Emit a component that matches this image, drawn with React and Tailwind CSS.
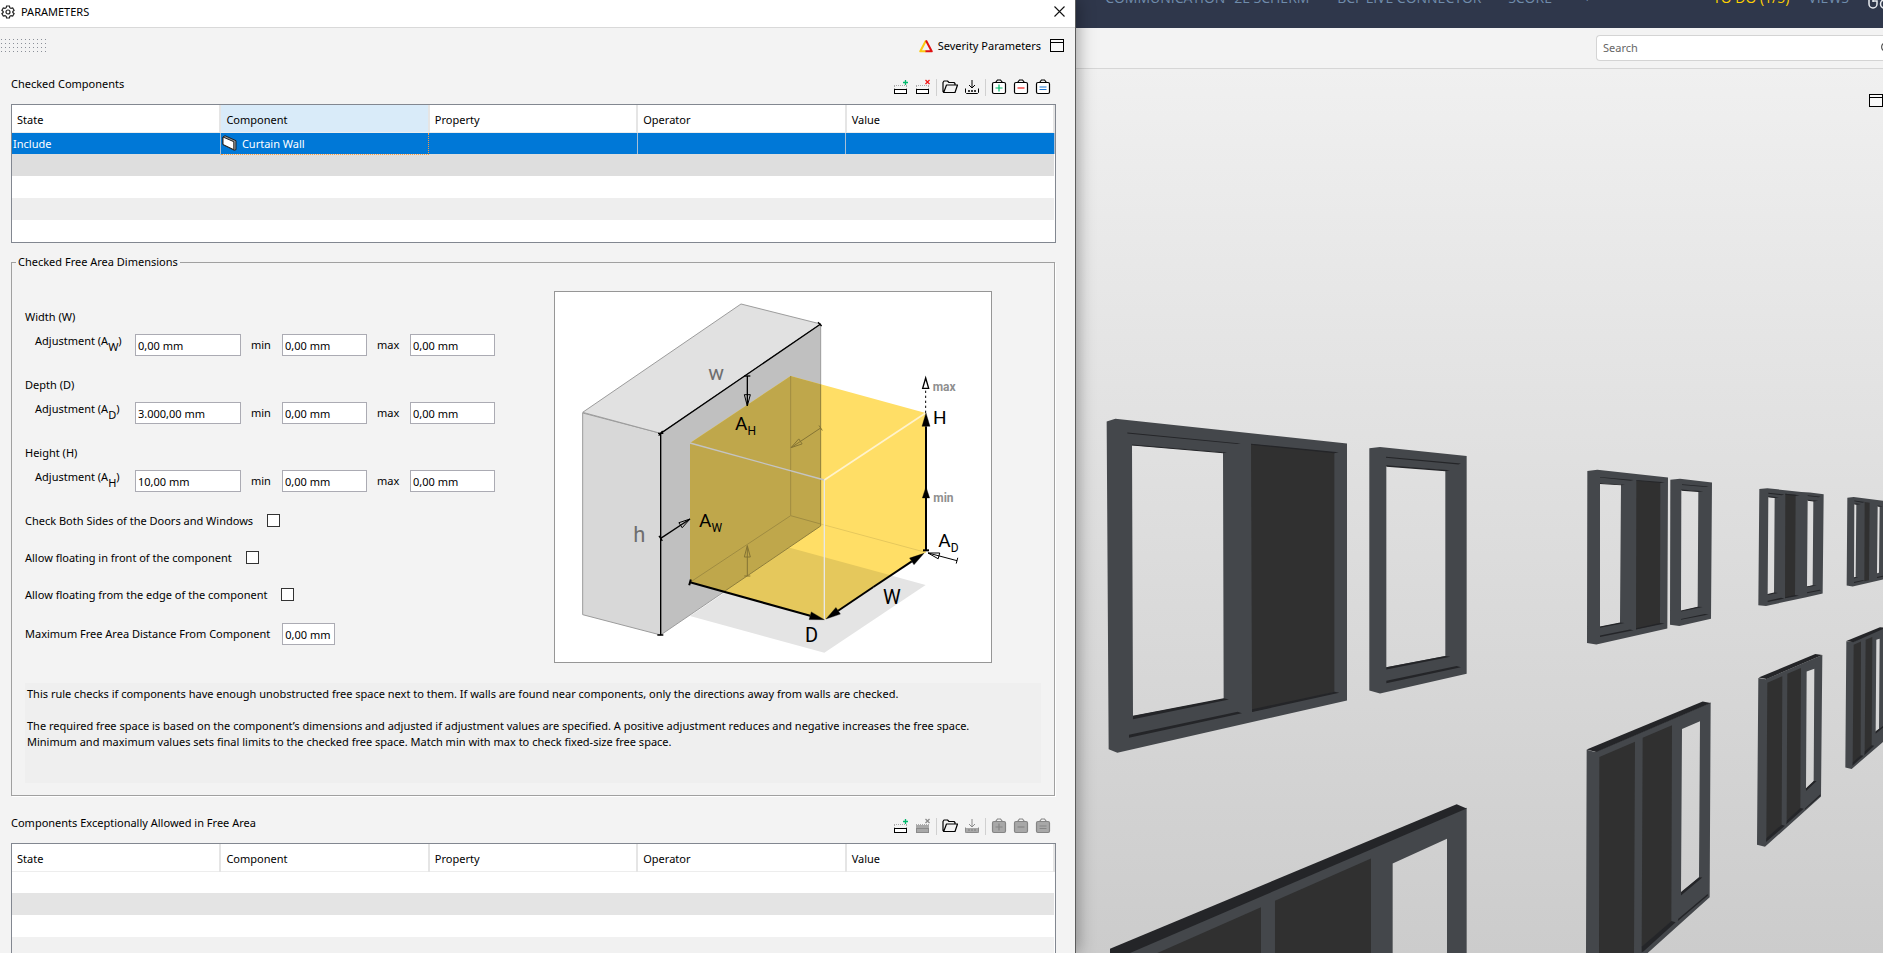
import React from 'react';

const COLUMNS = ['State', 'Component', 'Property', 'Operator', 'Value'];

function GearIcon() {
  return (
    <svg width="14" height="14" viewBox="0 0 14 14" fill="none" stroke="#222" strokeWidth="1.2">
      <path d="M5.600 1h2.800l.4 1.700 1.200.7 1.700-.5 1.400 2.400-1.300 1.200v1l1.300 1.200-1.400 2.400-1.700-.5-1.200.7-.4 1.700H5.600l-.4-1.700-1.200-.7-1.700.5L.9 8.700l1.300-1.200v-1L.9 5.300l1.400-2.400 1.700.5 1.200-.7z" />
      <circle cx="7" cy="7" r="2" />
    </svg>
  );
}

function CloseIcon() {
  return (
    <svg width="11" height="11" viewBox="0 0 11 11" stroke="#111" strokeWidth="1.1">
      <path d="M.5.5l10 10M10.500.5l-10 10" />
    </svg>
  );
}

function WindowIcon() {
  return (
    <svg width="14" height="14" viewBox="0 0 14 14" fill="#fafafa" stroke="#000" shapeRendering="crispEdges">
      <rect x=".5" y=".5" width="13" height="12" />
      <path d="M0 3.500h14" />
    </svg>
  );
}

function SeverityIcon() {
  return (
    <svg width="14" height="14" viewBox="0 0 14 14" fill="none" strokeWidth="2" strokeLinejoin="round">
      <path d="M7 1.500L1.300 12.300H7" stroke="#fbc912" />
      <path d="M7 1.500l5.700 10.800H6.500" stroke="#e01010" />
    </svg>
  );
}

function WallIcon() {
  return (
    <svg width="15" height="16" viewBox="0 0 15 16" strokeLinejoin="round" stroke="#222">
      <path d="M1 2l2-1.300 11 5v9l-1.800.5L1 9.500z" fill="#9a9a9a" />
      <path d="M1 2l10.800 4.700v8L1 9.500z" fill="#fff" />
    </svg>
  );
}

function RowIcon({ remove, disabled }) {
  const ink = disabled ? '#8a8a8a' : '#000';
  const mark = disabled ? '#8a8a8a' : remove ? '#f01818' : '#00b86b';
  return (
    <svg width="16" height="16" viewBox="0 0 16 16" fill="none">
      {disabled && <rect x="1" y="7" width="13" height="8" fill="#a8a8a8" />}
      <path d="M1 6.500h13M1.500 7v3M13.500 7v3" stroke="#aaa" strokeDasharray="1 1" />
      <rect x="1.500" y="10.500" width="12" height="4" stroke={ink} fill={disabled ? 'none' : '#fff'} />
      {remove ? (
        <path d="M10.500 1l4 4M14.500 1l-4 4" stroke={mark} strokeWidth="1.300" />
      ) : (
        <path d="M12.500 1v5M10 3.500h5" stroke={mark} strokeWidth="1.300" />
      )}
    </svg>
  );
}

function FolderIcon() {
  return (
    <svg width="16" height="16" viewBox="0 0 16 16" fill="none" stroke="#000" strokeWidth="1.200" strokeLinejoin="round">
      <path d="M1.700 13.500L1 12.500v-9l1-1.500h3.500l1.500 1.500h5l1 1v1.500M1.700 13.500L4.500 6h11l-2.500 7.500z" />
    </svg>
  );
}

function DownloadIcon({ disabled }) {
  const ink = disabled ? '#8a8a8a' : '#000';
  return (
    <svg width="16" height="16" viewBox="0 0 16 16" fill="none" stroke={ink}>
      {disabled && <rect x="1" y="10" width="14" height="5" fill="#a8a8a8" stroke="none" />}
      <path d="M8 1v8M5 6l3 3 3-3" />
      <path d="M1.500 9.500v4l1 1h11l1-1v-4" />
      <path d="M4 12h8" strokeWidth="1.500" strokeDasharray="2 1" />
    </svg>
  );
}

function BagIcon({ sign, disabled }) {
  const paths = { plus: 'M8 5.500v7M4.500 9h7', minus: 'M4.500 9h7', equal: 'M4.500 8h7M4.500 10.500h7' };
  const colors = { plus: '#00b86b', minus: '#f01818', equal: '#1a74d0' };
  return (
    <svg width="16" height="16" viewBox="0 0 16 16" stroke={disabled ? '#858585' : '#000'} strokeWidth="1.200" fill="none">
      <path d="M4.500 3.500L6.500 1h3l2 2.500" />
      <rect x="1.500" y="3.500" width="13" height="11" rx="1.500" fill={disabled ? '#a8a8a8' : '#fff'} />
      <path d={paths[sign]} stroke={disabled ? '#858585' : colors[sign]} />
    </svg>
  );
}

function SearchIcon() {
  return (
    <svg width="14" height="14" viewBox="0 0 14 14" fill="none" stroke="#555" strokeWidth="1.200">
      <circle cx="5" cy="6" r="4.400" />
      <path d="M8 9l4 4" />
    </svg>
  );
}

function ToolButton({ label, disabled, children }) {
  return (
    <button type="button" aria-label={label} disabled={disabled} className="block size-4">
      {children}
    </button>
  );
}

function Separator() {
  return <span className="-mx-px h-[17px] w-px bg-[#d0d0d0]" />;
}

function Toolbar({ empty }) {
  return (
    <div className="flex items-center gap-[6px] pr-[5px]">
      <ToolButton label="Add row"><RowIcon /></ToolButton>
      <ToolButton label="Remove row" disabled={empty}><RowIcon remove disabled={empty} /></ToolButton>
      <Separator />
      <ToolButton label="Open"><FolderIcon /></ToolButton>
      <ToolButton label="Save" disabled={empty}><DownloadIcon disabled={empty} /></ToolButton>
      <Separator />
      <ToolButton label="Add selection" disabled={empty}><BagIcon sign="plus" disabled={empty} /></ToolButton>
      <ToolButton label="Remove selection" disabled={empty}><BagIcon sign="minus" disabled={empty} /></ToolButton>
      <ToolButton label="Set selection" disabled={empty}><BagIcon sign="equal" disabled={empty} /></ToolButton>
    </div>
  );
}

function FilterTable({ label, activeColumn, selected, stripes }) {
  return (
    <div className="border border-[#828790] bg-white">
      <table aria-label={label} className="w-full table-fixed border-collapse text-left">
        <thead>
          <tr className="h-[27px]">
            {COLUMNS.map((name) => (
              <th
                key={name}
                className={`border-r-2 border-b border-r-[#e5e5e5] border-b-[#ededed] pt-[3px] pl-[5px] font-normal ${name === activeColumn ? 'bg-[#d9ebf9]' : ''}`}
              >
                {name}
              </th>
            ))}
          </tr>
        </thead>
        <tbody>
          {selected && (
            <tr className="h-[22px] bg-[#0078d7] text-white">
              <td className="border-r border-[#a7bfd6] pt-[2px] pl-px">{selected.state}</td>
              <td className="border border-dotted border-[#ff9b3d] p-0">
                <span className="flex items-center gap-[5px] pl-px">
                  <WallIcon />
                  <span className="pt-[2px]">{selected.component}</span>
                </span>
              </td>
              <td className="border-r border-[#a7bfd6]" />
              <td className="border-r border-[#a7bfd6]" />
              <td className="border-r border-[#a7bfd6]" />
            </tr>
          )}
          {stripes.map((stripe, i) => (
            <tr key={i} className={`h-[22px] ${stripe}`}>
              <td colSpan={5} />
            </tr>
          ))}
        </tbody>
      </table>
    </div>
  );
}

function Dimension({ title, sub, value }) {
  const id = `adjust-${sub}`;
  const field = 'h-[22px] border border-[#ababb3] bg-white pt-px pl-[2px]';
  return (
    <div className="h-[68px]">
      <h3 className="h-[26px] pt-px leading-4">{title}</h3>
      <div className="flex items-center">
        <label htmlFor={id} className="-mt-2 w-[110px] pl-[10px] whitespace-nowrap">
          Adjustment (A<sub className="bottom-0 align-[-6px] text-[11px]">{sub}</sub>)
        </label>
        <input id={id} defaultValue={value} className={`${field} w-[106px]`} />
        <label htmlFor={`${id}-min`} className="w-[41px] pl-[10px]">min</label>
        <input id={`${id}-min`} defaultValue="0,00 mm" className={`${field} w-[85px]`} />
        <label htmlFor={`${id}-max`} className="w-[43px] pl-[10px]">max</label>
        <input id={`${id}-max`} defaultValue="0,00 mm" className={`${field} w-[85px]`} />
      </div>
    </div>
  );
}

function CheckRow({ id, children }) {
  return (
    <div className="flex h-[37px] items-center gap-[14px]">
      <label htmlFor={id}>{children}</label>
      <input id={id} type="checkbox" className="size-[13px] appearance-none border border-[#333] bg-white checked:bg-[#333]" />
    </div>
  );
}

function Arrow({ x1, y1, x2, y2, len = 34, half = 9, width = 4, color = '#000', hollow, tick }) {
  const d = Math.hypot(x2 - x1, y2 - y1);
  const ux = (x2 - x1) / d;
  const uy = (y2 - y1) / d;
  const bx = x2 - ux * len;
  const by = y2 - uy * len;
  return (
    <g stroke={color} strokeWidth={width}>
      <path d={`M${x1} ${y1}L${hollow ? x2 : bx} ${hollow ? y2 : by}`} />
      {tick && <path d={`M${x1 - uy * 9} ${y1 + ux * 9}L${x1 + uy * 9} ${y1 - ux * 9}`} />}
      <polygon
        points={`${x2},${y2} ${bx - uy * half},${by + ux * half} ${bx + uy * half},${by - ux * half}`}
        fill={hollow ? 'none' : color}
        strokeWidth={hollow ? 3 : 1}
      />
    </g>
  );
}

function FreeAreaDiagram() {
  return (
    <svg viewBox="45 36 1308 1111" className="block w-full" fontFamily="Roboto, sans-serif" fill="none" role="img" aria-label="Free area dimensions">
      <polygon points="450,1008 752,804 1157,915 853,1118" fill="#e4e4e4" />
      <g stroke="#9c9c9c" strokeWidth="3" strokeLinejoin="round">
        <polygon points="128,399 362,460 362,1065 128,1004" fill="#d8d8d8" />
        <polygon points="128,397 603,72 842,132 362,460" fill="#e1e1e1" />
        <polygon points="362,460 842,132 842,738 362,1065" fill="#c0c0c0" />
      </g>

      <polygon points="450,489 752,288 1157,399 1157,817 853,1019 450,907" fill="#ffde66" />
      <polygon points="744,804 752,804 1052,886 853,1019 552,935" fill="#e5c85c" />
      <polygon points="450,489 752,288 842,313 842,738 552,935 450,907" fill="#bfa74b" />
      <path d="M752 288V707L450 907" stroke="#a08c40" strokeWidth="3" />
      <path d="M752 707l90 25" stroke="#a08c40" strokeWidth="3" />
      <path d="M842 732l315 85" stroke="#e6c85c" strokeWidth="3" />
      <path d="M842 313V738L552 935" stroke="#8f7d3b" strokeWidth="3" />
      <path d="M450 489l403 111" stroke="#c4c4c4" strokeWidth="4" />
      <path d="M1157 399L853 600" stroke="#fff3cc" strokeWidth="5" />
      <path d="M853 600v419" stroke="#e8e8e8" strokeWidth="4" />

      <path d="M842 132L362 460V1065" stroke="#000" strokeWidth="4" />
      <path d="M834 127l11 11M354 460h16M368 453l-12 14M352 1065h18" stroke="#000" strokeWidth="4" />

      <Arrow x1={622} y1={288} x2={622} y2={378} hollow tick />
      <Arrow x1={362} y1={775} x2={450} y2={717} hollow tick />
      <Arrow x1={1251} y1={842} x2={1164} y2={819} hollow tick width={3} />
      <Arrow x1={842} y1={444} x2={753} y2={503} hollow tick width={3} color="#857333" />
      <Arrow x1={622} y1={888} x2={622} y2={797} hollow tick width={3} color="#857333" />

      <Arrow x1={450} y1={907} x2={853} y2={1019} len={44} half={12} width={6} tick />
      <Arrow x1={1000} y1={921} x2={858} y2={1017} len={44} half={12} width={6} />
      <Arrow x1={1000} y1={921} x2={1152} y2={820} len={44} half={12} width={6} />
      <Arrow x1={1158} y1={811} x2={1158} y2={399} len={40} half={12} width={6} tick />
      <Arrow x1={1158} y1={811} x2={1158} y2={620} len={34} half={11} width={6} />
      <path d="M1157 399V326" stroke="#000" strokeWidth="3" strokeDasharray="7 8" />
      <polygon points="1157,294 1148,325 1166,325" stroke="#000" strokeWidth="4" />

      <g fill="#6e6e6e" fontSize="63">
        <text x="505" y="299">w</text>
        <text x="280" y="786" fontSize="66">h</text>
      </g>
      <g fill="#8f8f8f" fontSize="36" fontWeight="700">
        <text x="1178" y="333">max</text>
        <text x="1180" y="666">min</text>
      </g>
      <g fill="#000" fontSize="57">
        <text x="1179" y="432">H</text>
        <text x="585" y="450">A<tspan fontSize="36" dy="15">H</tspan></text>
        <text x="477" y="741">A<tspan fontSize="36" dy="15">W</tspan></text>
        <text x="1195" y="801">A<tspan fontSize="36" dy="15">D</tspan></text>
        <text x="795" y="1085" fontSize="60">D</text>
        <text x="1029" y="971" fontSize="60">W</text>
      </g>
    </svg>
  );
}

function ParametersDialog() {
  return (
    <section className="relative z-10 flex w-[57.15%] shrink-0 flex-col border-r border-[#5c5c5c] bg-[#f3f3f3] shadow-[2px_0_16px_rgba(0,0,0,0.35)]">
      <header className="flex h-7 shrink-0 items-center border-b border-[#d9d9d9] bg-white pr-[10px] pb-1 pl-px">
        <GearIcon />
        <h1 className="ml-[6px] flex-1">PARAMETERS</h1>
        <button type="button" aria-label="Close"><CloseIcon /></button>
      </header>

      <div className="flex h-9 shrink-0 items-center pr-[11px]">
        <svg width="48" height="14" shapeRendering="crispEdges" aria-hidden="true">
          <pattern id="grip" width="4" height="4" patternUnits="userSpaceOnUse">
            <rect x="1" y="0" width="1" height="1" fill="#8a8f98" />
          </pattern>
          <rect width="47" height="14" fill="url(#grip)" />
        </svg>
        <button type="button" className="ml-auto flex items-center gap-[5px]">
          <SeverityIcon />
          Severity Parameters
        </button>
        <button type="button" aria-label="Maximize" className="ml-[9px]"><WindowIcon /></button>
      </div>

      <div className="flex flex-col pr-[19px] pl-[11px]">
        <div className="flex h-10 items-center justify-between">
          <h2>Checked Components</h2>
          <div className="pt-[6px]"><Toolbar /></div>
        </div>
        <FilterTable
          label="Checked Components"
          activeColumn="Component"
          selected={{ state: 'Include', component: 'Curtain Wall' }}
          stripes={['bg-[#dedede]', 'bg-white', 'bg-[#eeeeee]', 'bg-white']}
        />

        <fieldset className="mt-[10px] mr-px border border-[#a0a0a0] px-[13px] pb-3 shadow-[1px_1px_0_#fff]">
          <legend className="-ml-[9px] px-[2px] leading-[18px]">Checked Free Area Dimensions</legend>
          <div className="flex">
            <div className="flex-1 pt-[37px]">
              <Dimension title="Width (W)" sub="W" value="0,00 mm" />
              <Dimension title="Depth (D)" sub="D" value="3.000,00 mm" />
              <Dimension title="Height (H)" sub="H" value="10,00 mm" />
              <div className="-mt-[10px]">
                <CheckRow id="both-sides">Check Both Sides of the Doors and Windows</CheckRow>
                <CheckRow id="float-front">Allow floating in front of the component</CheckRow>
                <CheckRow id="float-edge">Allow floating from the edge of the component</CheckRow>
              </div>
              <div className="mt-[10px] flex items-center gap-3">
                <label htmlFor="max-distance">Maximum Free Area Distance From Component</label>
                <input id="max-distance" defaultValue="0,00 mm" className="h-[22px] w-[53px] border border-[#ababb3] bg-white pt-px pl-[2px]" />
              </div>
            </div>
            <div className="mt-5 mr-[49px] w-[438px] self-start border border-[#969696] bg-white">
              <FreeAreaDiagram />
            </div>
          </div>
          <div className="mt-5 h-[100px] bg-[#efefef] pt-[3px] pl-[2px] leading-4">
            <p>This rule checks if components have enough unobstructed free space next to them. If walls are found near components, only the directions away from walls are checked.</p>
            <p className="mt-4">The required free space is based on the component’s dimensions and adjusted if adjustment values are specified. A positive adjustment reduces and negative increases the free space.</p>
            <p>Minimum and maximum values sets final limits to the checked free space. Match min with max to check fixed-size free space.</p>
          </div>
        </fieldset>

        <div className="mt-[7px] flex h-10 items-center justify-between">
          <h2>Components Exceptionally Allowed in Free Area</h2>
          <div className="pt-[6px]"><Toolbar empty /></div>
        </div>
        <FilterTable
          label="Components Exceptionally Allowed in Free Area"
          stripes={['bg-white', 'bg-[#e4e4e4]', 'bg-white', 'bg-[#f1f1f1]', 'bg-white']}
        />
      </div>
    </section>
  );
}

const FRAME = '#44474b';
const EDGE = '#242528';
const PANEL = '#303030';

function Facade() {
  return (
    <svg viewBox="1076 69 807 884" preserveAspectRatio="xMinYMin slice" className="block size-full" role="img" aria-label="Model view">
      {/* near bay */}
      <g transform="translate(1080 400) scale(.33333 .35268)" fill={EDGE}>
        <path
          fill={FRAME}
          fillRule="evenodd"
          d="M80 61L106 53 801 123V852L112 1000 86 990zM156 128L429 149 431 848 159 896z"
        />
        <path d="M156 126l285 23-12 2-273-22zM142 92l340 31-10 2-330-30zM159 895l272-49 16 3-288 56zM147 949l326-65 13 4-339 70z" />
        <path fill={PANEL} d="M513 125L763 149V828L516 884z" />
        <path d="M513 124l263 24-13 3-250-24zM516 877l248-50 14 3-262 55z" />
        <path
          fill={FRAME}
          fillRule="evenodd"
          d="M868 137L900 133 1160 159V776L900 832 868 824zM919 187L1096 200V726L919 758z"
        />
        <path d="M919 185l191 14-14 3-177-13zM918 161l225 19-8 3-217-19zM919 758l177-32 15 2-192 36zM919 796l211-42 13 4-224 45z" />
        <path fill={FRAME} fillRule="evenodd" d="M90 1560L1160 1156V1570H90zM938 1314L1101 1244V1570H938z" />
        <path d="M90 1556L1130 1146 1160 1158 150 1568H90z" />
        <path fill={PANEL} d="M232 1568L543 1438V1568zM585 1420L873 1300V1568H585z" />
      </g>

      {/* far bays */}
      <g transform="translate(1480 400) scale(.33333 .35268)" fill={EDGE}>
        <path
          fill={FRAME}
          fillRule="evenodd"
          d="M322 201L352 198 564 220 562 648 349 693 321 689zM360 236L423 240 420 632 360 643z"
        />
        <path d="M360 235l75 5-12 2-63-4zM360 218l101 9-9 2-92-9zM360 642l60-11 14 1-74 14zM360 668l90-17 11 2-101 19z" />
        <path fill={PANEL} d="M469 228L541 234 540 635 468 650z" />
        <path d="M469 227l86 6-14 2-72-6zM468 647l72-15 14 2-86 17z" />
        <path
          fill={FRAME}
          fillRule="evenodd"
          d="M571 226L600 223 696 234 693 620 598 641 570 637zM604 255L655 259 653 587 603 598z"
        />
        <path d="M604 254l66 5-15 2-51-4zM606 239l80 6-8 2-72-6zM603 597l50-11 15 1-65 13zM603 621l71-14 12 1-83 15z" />

        <path
          fill={FRAME}
          fillRule="evenodd"
          d="M838 252L862 250 964 261 990 262 1031 267 1028 549 979 559 858 584 835 582zM865 275L884 277 882 548 863 551zM983 284L1000 286 998 526 981 529z"
        />
        <path d="M865 273l32 3-13 2-19-2zM865 263l48 5-8 2-40-4zM983 283l32 3-15 2-17-2zM983 270l40 4-8 2-32-4zM863 550l19-4 12 1-31 6zM863 569l40-8 10 2-50 10zM981 529l17-4 12 1-29 5zM981 545l38-7 4 2-42 8z" />
        <path fill={PANEL} d="M916 266L947 269 945 555 915 561z" />
        <path d="M916 266l43 4-12 2-31-3zM915 559l30-6 12 2-42 7z" />

        <path
          fill={FRAME}
          fillRule="evenodd"
          d="M1102 277L1121 275 1209 286V509L1118 529 1100 526zM1123 294L1129 295 1127 502 1122 503zM1193 301L1199 302 1197 490 1191 491z"
        />
        <path d="M1123 293l20 2-14 2-6-1zM1123 285l32 4-8 2-24-4zM1193 299l16 2-10 2-6-1zM1122 503l5-1 8 0-13 4zM1122 516l25-5 8 1-33 7zM1191 502l18-4v3l-18 4z" />
        <path fill={PANEL} d="M1154 289L1169 291 1167 511 1153 514z" />

        <path
          fill={FRAME}
          fillRule="evenodd"
          d="M320 992L345 998 692 858 689 1410 503 1568H318zM606 933L660 911 657 1354 603 1397z"
        />
        <path d="M320 991L668 855 692 859 349 998z" />
        <path fill={PANEL} d="M358 1012L465 969 462 1568H357zM488 958L576 922 574 1478 485 1552z" />
        <path d="M485 1550l89-73 13 4-96 82-6 3zM603 1395l54-42 10 1-64 51zM595 1471l88-70 1 4-91 73z" />

        <path
          fill={FRAME}
          fillRule="evenodd"
          d="M835 788L857 792 1027 723 1023 1124 855 1267 831 1261zM980 770L1003 762 1001 1082 978 1102z"
        />
        <path d="M836 787L1006 720 1027 723 860 791z" />
        <path fill={PANEL} d="M862 802L907 783 905 1205 859 1242zM922 776L963 760 961 1158 920 1192z" />
        <path d="M859 1242l46-38 10 3-57 46zM920 1192l41-35 10 2-52 44zM978 1101l23-21 9 0-32 29zM975 1158l46-40v5l-46 38z" />

        <path
          fill={FRAME}
          fillRule="evenodd"
          d="M1099 684L1118 686 1209 646V970L1115 1046 1096 1042zM1189 680L1199 677 1197 933 1187 941z"
        />
        <path d="M1099 683L1200 644 1209 645V649L1120 687z" />
        <path fill={PANEL} d="M1121 694L1143 685 1142 1008 1118 1028zM1157 680L1177 672 1175 980 1154 997z" />
        <path d="M1118 1027l24-20 9 2-34 28zM1154 996l21-17 8 1-30 27zM1187 939l22-15v5l-22 17z" />
      </g>
    </svg>
  );
}

function Viewer() {
  return (
    <main className="flex min-w-0 flex-1 flex-col overflow-hidden">
      <nav className="flex h-7 shrink-0 overflow-hidden bg-[#2f374b] pl-[29px] font-['Open_Sans',sans-serif] text-[14px] whitespace-nowrap text-[#6f8cab]">
        <div className="-mt-[10px] flex w-full leading-4">
          <a href="#communication" className="w-[129px]">COMMUNICATION</a>
          <a href="#scherm" className="w-[103px]">2E SCHERM</a>
          <a href="#bcf" className="w-[171px]">BCF LIVE CONNECTOR</a>
          <a href="#score" className="w-[75px]">SCORE</a>
          <a href="#add">+</a>
          <a href="#todo" className="ml-auto text-[#ffd100]">TO DO (1/5)</a>
          <a href="#views" className="mr-[19px] ml-[19px]">VIEWS</a>
          <svg width="15" height="20" viewBox="0 0 15 20" fill="none" stroke="#e8ebf0" strokeWidth="1.500" aria-hidden="true">
            <path d="M1 8v6a4 4 0 0 0 8 0v-3H5M5 8v4" />
            <path d="M16 10a3.500 4 0 0 0 0 8" />
          </svg>
        </div>
      </nav>
      <div className="flex h-[41px] shrink-0 items-center justify-end border-b border-[#d6d6d6] bg-[#f3f3f3]">
        <div className="flex h-[26px] w-[287px] items-center overflow-hidden rounded-l border border-r-0 border-[#d4d4d4] bg-white pl-[6px]">
          <input aria-label="Search" placeholder="Search" className="w-[278px] shrink-0 placeholder:text-[#666]" />
          <span className="shrink-0"><SearchIcon /></span>
        </div>
      </div>
      <div className="relative min-h-0 flex-1 bg-linear-to-b from-[#f0f0f0] to-[#cccccc]">
        <Facade />
        <button type="button" aria-label="Maximize" className="absolute top-[25px] right-0"><WindowIcon /></button>
      </div>
    </main>
  );
}

export default function App() {
  return (
    <div className="flex h-screen overflow-hidden font-['Noto_Sans',sans-serif] text-[11px] leading-4 text-black">
      <ParametersDialog />
      <Viewer />
    </div>
  );
}
